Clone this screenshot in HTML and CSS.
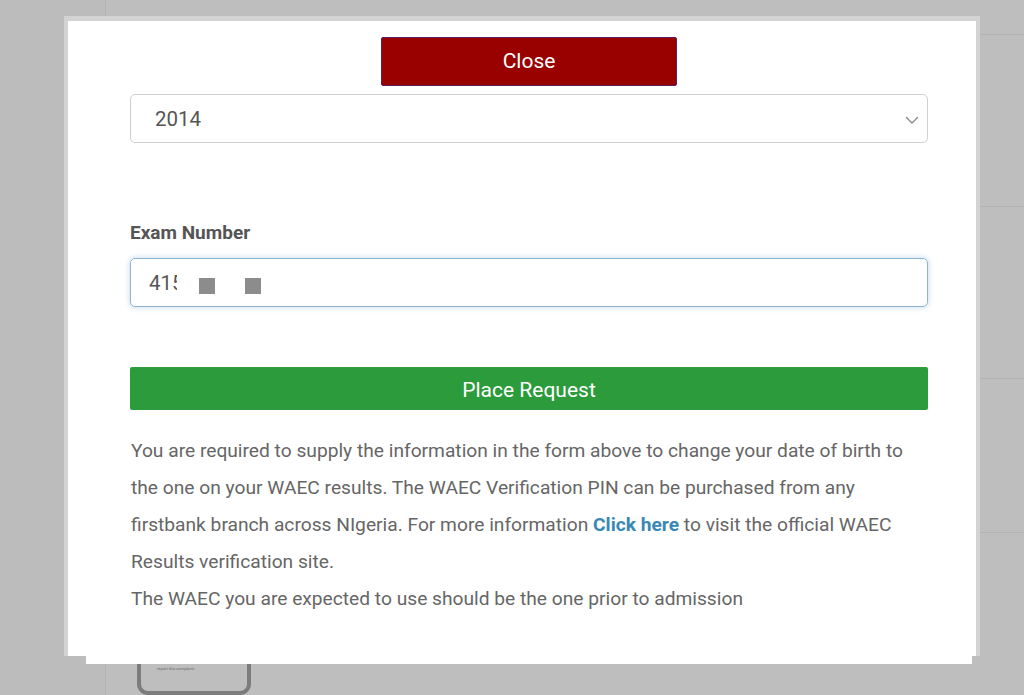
FILE: index.html
```html
<!DOCTYPE html>
<html>
<head>
<meta charset="utf-8">
<link rel="stylesheet" href="styles.css">
</head>
<body>
<div class="page">
  <aside class="sidebar"></aside>
  <main class="main">
    <div class="row row-top"></div>
    <div class="row row-a"></div>
    <div class="row row-b"></div>
    <div class="row row-c"></div>
    <div class="row row-last">
      <div class="card"><span class="card-text">report this complaint</span></div>
    </div>
  </main>
</div>

<div class="modal">
  <div class="modal-tail"></div>
  <div class="modal-body">
    <div class="close-wrap"><button class="btn-close">Close</button></div>
    <div class="select">
      <span class="select-value">2014</span>
      <svg class="chevron" width="14" height="8" viewBox="0 0 14 8"><path d="M1 1 L7 7 L13 1" fill="none" stroke="#8a8a8a" stroke-width="1.4"/></svg>
    </div>
    <label class="label">Exam Number</label>
    <div class="input">
      <span class="input-value">415</span>
      <span class="mask"></span>
      <span class="sq sq1"></span>
      <span class="sq sq2"></span>
    </div>
    <button class="btn-request">Place Request</button>
    <p class="info">You are required to supply the information in the form above to change your date of birth to the one on your WAEC results. The WAEC Verification PIN can be purchased from any firstbank branch across NIgeria. For more information <a class="link">Click here</a> to visit the official WAEC Results verification site.<br>The WAEC you are expected to use should be the one prior to admission</p>
  </div>
</div>
</body>
</html>
```

FILE: styles.css
```css
* { box-sizing: border-box; }
html, body { margin: 0; padding: 0; }
body {
  width: 1024px;
  height: 695px;
  overflow: hidden;
  background: #bdbdbd;
  font-family: Roboto, "Liberation Sans", sans-serif;
  position: relative;
}
.page {
  display: flex;
  height: 695px;
}
.sidebar {
  width: 106px;
  background: #bcbcbc;
  border-right: 1px solid #b4b4b4;
}
.main {
  flex: 1;
  display: flex;
  flex-direction: column;
  background: #bebebe;
}
.row { border-bottom: 1px solid #b3b3b3; }
.row-top { height: 35px; }
.row-a { height: 172px; }
.row-b { height: 172px; }
.row-c { height: 154px; }
.row-last { flex: 1; border-bottom: none; padding: 112px 0 0 31px; }
.card {
  width: 114px;
  height: 50px;
  border: 4px solid #7c7c7c;
  border-radius: 11px;
  padding: 6px 0 0 16px;
}
.card-text {
  font-size: 4px;
  color: #6a6a6a;
}

.modal {
  position: absolute;
  left: 64px;
  top: 16px;
  width: 916px;
  height: 640px;
  background: #fff;
  border: 4px solid #d3d3d3;
  border-top-width: 5px;
  border-bottom: none;
}
.modal-tail {
  position: absolute;
  left: 18px;
  right: 4px;
  bottom: -8px;
  height: 12px;
  background: #fff;
}
.modal-body {
  position: relative;
  padding: 16px 48px 0 62px;
}
.close-wrap {
  display: flex;
  justify-content: center;
}
.btn-close {
  width: 296px;
  height: 49px;
  background: #990000;
  border: 1px solid #5b1f5e;
  border-radius: 2px;
  color: #fff;
  font-family: Roboto, "Liberation Sans", sans-serif;
  font-size: 21px;
  padding: 0 0 2px;
}
.select {
  margin-top: 8px;
  height: 49px;
  border: 1px solid #cfcfcf;
  border-radius: 5px;
  display: flex;
  align-items: center;
  justify-content: space-between;
  padding: 0 8px 0 24px;
}
.select-value {
  font-size: 20.5px;
  color: #555;
}
.chevron { margin-top: 2px; }
.label {
  display: block;
  margin-top: 78px;
  font-size: 19px;
  line-height: 24px;
  font-weight: 700;
  color: #555;
}
.input {
  position: relative;
  margin-top: 13px;
  height: 49px;
  border: 1px solid #8fb5d3;
  border-radius: 5px;
  box-shadow: 0 0 5px 1px rgba(120, 170, 215, 0.35);
  display: flex;
  align-items: center;
  padding: 0 0 0 18px;
}
.input-value {
  font-size: 20.5px;
  color: #555;
}
.mask {
  position: absolute;
  left: 46px;
  top: 3px;
  width: 52px;
  height: 40px;
  background: #fff;
}
.sq {
  position: absolute;
  top: 19px;
  width: 16px;
  height: 16px;
  background: #8c8c8c;
}
.sq1 { left: 68px; }
.sq2 { left: 114px; }
.btn-request {
  display: block;
  width: 100%;
  margin-top: 60px;
  height: 43px;
  background: #2b9b3b;
  border: none;
  border-radius: 2px;
  color: #fff;
  font-family: Roboto, "Liberation Sans", sans-serif;
  font-size: 21px;
  padding: 3px 0 0;
}
.info {
  margin: 22px 0 0 1px;
  font-size: 19.2px;
  line-height: 37px;
  color: #666;
}
.link {
  color: #3a87b6;
  font-weight: 700;
}
```
